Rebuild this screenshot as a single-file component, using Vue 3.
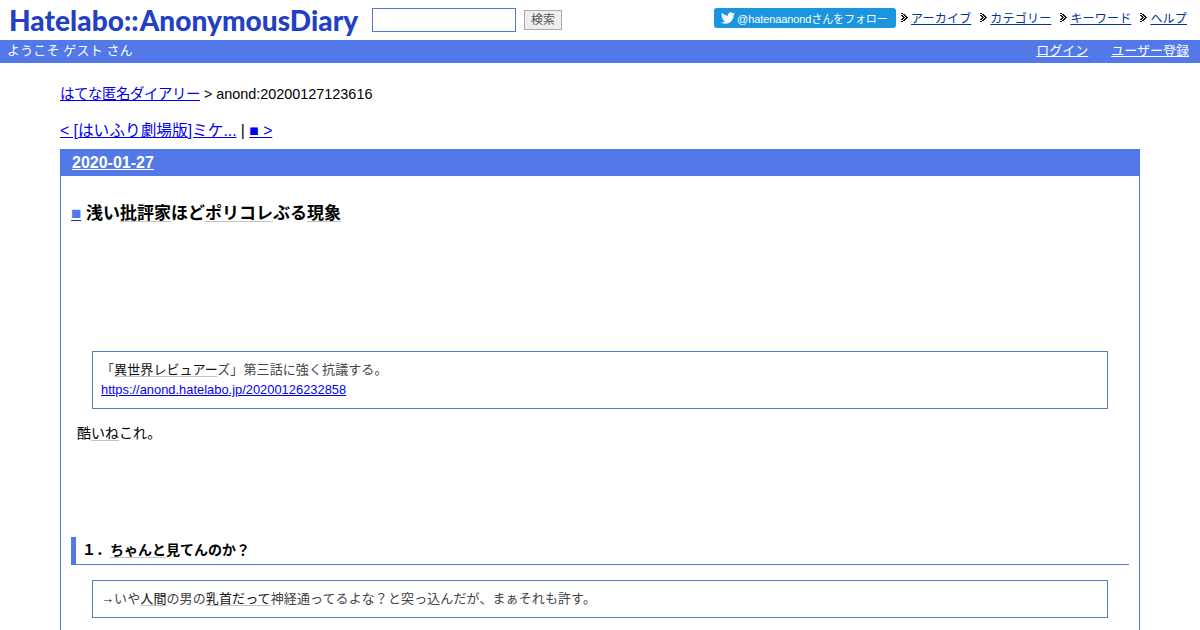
<script setup>
const navItems = ['アーカイブ', 'カテゴリー', 'キーワード', 'ヘルプ']
</script>

<template>
  <div class="page">
    <header class="top">
      <a class="logo" href="#">Hatelabo::<span class="logo-b">AnonymousDiary</span></a>
      <form class="search" @submit.prevent>
        <input class="search-input" type="text" />
        <button class="search-btn" type="button">検索</button>
      </form>
      <nav class="top-nav">
        <a class="follow" href="#">
          <svg class="bird" viewBox="0 0 24 24" width="14" height="14" aria-hidden="true">
            <path fill="#fff" d="M23.95 4.57a10 10 0 0 1-2.82.77 4.96 4.96 0 0 0 2.16-2.72c-.95.55-2 .96-3.12 1.19a4.92 4.92 0 0 0-8.38 4.48C7.69 8.1 4.07 6.13 1.64 3.16a4.82 4.82 0 0 0-.66 2.47c0 1.71.87 3.21 2.19 4.1a4.9 4.9 0 0 1-2.23-.62v.06a4.92 4.92 0 0 0 3.95 4.83c-.72.19-1.48.22-2.22.08a4.94 4.94 0 0 0 4.6 3.42A9.87 9.87 0 0 1 0 19.54a14 14 0 0 0 7.56 2.21c9.05 0 14-7.5 14-13.98 0-.21 0-.42-.02-.63a9.94 9.94 0 0 0 2.41-2.55z"/>
          </svg>
          <span>@hatenaanondさんをフォロー</span>
        </a>
        <span v-for="item in navItems" :key="item" class="nav-item">
          <svg class="chev" viewBox="0 0 7 9" width="7" height="9" aria-hidden="true" shape-rendering="crispEdges">
            <path fill="#111" d="M0 0h2v1H0zM2 1h2v1H2zM3 2h2v1H3zM4 3h2v1H4zM5 4h2v1H5zM4 5h2v1H4zM3 6h2v1H3zM2 7h2v1H2zM0 8h2v1H0zM0 2h2v1H0zM1 3h2v1H1zM2 4h2v1H2zM1 5h2v1H1zM0 6h2v1H0z"/>
          </svg>
          <a href="#">{{ item }}</a>
        </span>
      </nav>
    </header>

    <div class="bar">
      <span>ようこそ ゲスト さん</span>
      <span class="bar-links">
        <a href="#">ログイン</a>
        <a href="#">ユーザー登録</a>
      </span>
    </div>

    <main class="main">
      <p class="crumb"><a href="#">はてな匿名ダイアリー</a> &gt; anond:20200127123616</p>
      <p class="pager"><a href="#">&lt; [はいふり劇場版]ミケ...</a> | <a href="#">■ &gt;</a></p>

      <section class="day">
        <h2 class="date"><a href="#">2020-01-27</a></h2>
        <div class="body">
          <h3 class="title"><a class="sq" href="#">■</a> 浅い<span class="kw">批評家</span>ほど<span class="kw">ポリコレ</span>ぶる<span class="kw">現象</span></h3>

          <blockquote class="quote q1">
            <p>「<span class="kw dark">異世界レビュアー</span>ズ」第三話に強く抗議する。</p>
            <p class="url"><a href="#">https://anond.hatelabo.jp/20200126232858</a></p>
          </blockquote>

          <p class="para">酷<span class="kw">いね</span>これ。</p>

          <h4 class="sub">１．<span class="kw">ちゃんと</span>見てんのか？</h4>

          <blockquote class="quote q2">
            <p><span class="dark">→</span>いや<span class="kw dark">人間</span>の男の<span class="kw dark">乳首だって</span>神経通ってるよな？と突っ込んだが、まぁそれも許す。</p>
          </blockquote>
        </div>
      </section>
    </main>
  </div>
</template>

<style>
html, body { margin: 0; background: #fff; overflow: hidden; }
</style>

<style scoped>
.page {
  font-family: "Liberation Sans", "Noto Sans CJK JP", sans-serif;
  color: #000;
  height: 630px;
  overflow: hidden;
}
p { margin: 0; }
a { color: #0000ee; }

.top {
  height: 40px;
  display: flex;
  align-items: flex-start;
  box-sizing: border-box;
  padding: 0 14px 0 9px;
}
.logo {
  width: 351px;
  flex: none;
  margin-top: 3px;
  font-family: Lato, "Liberation Sans", sans-serif;
  font-weight: 900;
  font-size: 28px;
  line-height: 34px;
  letter-spacing: 0.05px;
  color: #2240c4;
  text-decoration: none;
  white-space: nowrap;
}
.logo-b { margin-left: 1px; }
.search {
  display: flex;
  align-items: center;
  margin: 8px 0 0 12px;
  gap: 8px;
}
.search-input {
  width: 144px;
  height: 24px;
  box-sizing: border-box;
  border: 1px solid #5577cc;
  padding: 0;
  margin: 0;
  background: #fff;
}
.search-btn {
  width: 38px;
  height: 20px;
  box-sizing: border-box;
  margin: 0;
  padding: 0;
  border: 1px solid #aaa;
  background: #eee;
  color: #555;
  font-size: 12px;
  font-family: inherit;
  line-height: 18px;
}
.top-nav {
  margin: 8px 0 0 auto;
  display: flex;
  align-items: center;
  font-size: 12px;
  height: 20px;
}
.follow {
  width: 182px;
  height: 20px;
  box-sizing: border-box;
  background: #1b95e0;
  border-radius: 3px;
  color: #fff;
  text-decoration: none;
  display: flex;
  align-items: center;
  padding-left: 7px;
  gap: 2px;
  font-size: 11px;
  letter-spacing: -0.1px;
  white-space: nowrap;
  margin-right: 5px;
}
.nav-item {
  display: flex;
  align-items: center;
  margin-right: 10px;
  margin-bottom: 2px;
  gap: 3px;
}
.nav-item:last-child { margin-right: 0; }
.nav-item a { color: #003399; letter-spacing: 0.2px; margin-right: -1px; }

.bar {
  height: 23px;
  background: #5279e7;
  color: #fff;
  font-size: 13px;
  line-height: 22px;
  display: flex;
  justify-content: space-between;
  padding: 0 11px 0 7px;
}
.bar > span:first-child { letter-spacing: 0.15px; }
.bar-links { display: flex; gap: 23px; }
.bar-links a { color: #fff; }

.main { padding: 0 60px; }
.crumb { padding-top: 22px; font-size: 14.4px; line-height: 18px; }
.crumb a { letter-spacing: -0.4px; }
.pager { margin-top: 19px; font-size: 15.7px; line-height: 18px; }

.day {
  margin-top: 9px;
  border-left: 1px solid #5279e7;
  border-right: 1px solid #5279e7;
  min-height: 500px;
}
.date {
  margin: 0 -1px;
  height: 27px;
  background: #5279e7;
  padding-left: 12px;
  font-size: 16px;
  line-height: 27px;
  font-weight: 700;
}
.date a { color: #fff; }
.body { padding: 0 10px; }
.title {
  margin: 0;
  padding-top: 27px;
  font-size: 17px;
  line-height: 22px;
  font-weight: 700;
}
.sq { color: #5279e7; text-decoration-color: #2233bb; }
.kw {
  text-decoration: underline;
  text-decoration-color: #c4c4c4;
  text-decoration-thickness: 1px;
  text-underline-offset: 2px;
}
.dark { color: #111; }
.quote {
  margin: 0 21px;
  padding: 8px;
  border: 1px solid #5b78c8;
  font-size: 13px;
  line-height: 20px;
  letter-spacing: 0.1px;
  color: #444;
}
.url { font-size: 12.9px; letter-spacing: 0; }
.q1 { margin-top: 126px; }
.q2 { margin-top: 15px; }
.para { margin: 14px 0 0 6px; font-size: 14px; line-height: 20px; }
.sub {
  margin: 94px 0 0;
  height: 28px;
  box-sizing: border-box;
  border-left: 5px solid #5279e7;
  border-bottom: 1px solid #5279e7;
  padding-left: 6px;
  font-size: 14px;
  line-height: 27px;
  font-weight: 700;
}
</style>
